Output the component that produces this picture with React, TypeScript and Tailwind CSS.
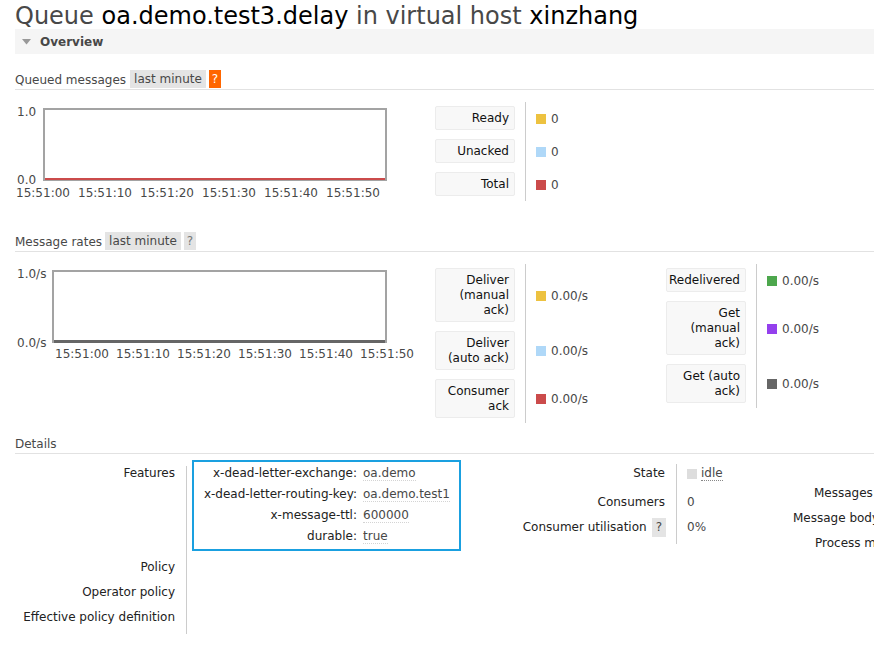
type LegendItem = { label: string; swatch: string; value: string };

const queued: LegendItem[] = [
  { label: 'Ready', swatch: 'bg-[#edc240]', value: '0' },
  { label: 'Unacked', swatch: 'bg-[#afd8f8]', value: '0' },
  { label: 'Total', swatch: 'bg-[#cb4b4b]', value: '0' },
];

const ratesLeft: LegendItem[] = [
  { label: 'Deliver (manual ack)', swatch: 'bg-[#edc240]', value: '0.00/s' },
  { label: 'Deliver (auto ack)', swatch: 'bg-[#afd8f8]', value: '0.00/s' },
  { label: 'Consumer ack', swatch: 'bg-[#cb4b4b]', value: '0.00/s' },
];

const ratesRight: LegendItem[] = [
  { label: 'Redelivered', swatch: 'bg-[#4da74d]', value: '0.00/s' },
  { label: 'Get (manual ack)', swatch: 'bg-[#9440ed]', value: '0.00/s' },
  { label: 'Get (auto ack)', swatch: 'bg-[#666666]', value: '0.00/s' },
];

const ticks = ['15:51:00', '15:51:10', '15:51:20', '15:51:30', '15:51:40', '15:51:50'];

const features = [
  { key: 'x-dead-letter-exchange:', value: 'oa.demo' },
  { key: 'x-dead-letter-routing-key:', value: 'oa.demo.test1' },
  { key: 'x-message-ttl:', value: '600000' },
  { key: 'durable:', value: 'true' },
];

const SectionHeader = ({ title, children }: { title: string; children?: React.ReactNode }) => (
  <div className="flex items-start h-[20px] border-b border-[#e2e2e2] text-[#484848]">
    <span className="leading-[19px] pt-[1px]">{title}</span>
    {children}
  </div>
);

const Legend = ({ items, valueWidth }: { items: LegendItem[]; valueWidth: string }) => (
  <div className="flex flex-col">
    {items.map((item) => (
      <div key={item.label} className="flex">
        <div className="pr-[10px] pt-[4px] pb-[5px]">
          <div className="w-[80px] border border-[#ececec] bg-[#f8f8f8] rounded-[2px] py-[3.5px] pl-[1px] pr-[5px] text-right leading-[15px] text-[#111]">
            {item.label}
          </div>
        </div>
        <div className={`${valueWidth} border-l border-[#cccccc] pl-[10px] flex items-center gap-[5px] text-[#484848]`}>
          <span className={`w-[10px] h-[10px] ${item.swatch}`} />
          {item.value}
        </div>
      </div>
    ))}
  </div>
);

export default function App() {
  return (
    <div className="w-[874px] h-[646px] overflow-hidden bg-white text-[12px] font-['DejaVu_Sans',sans-serif]">
      <div className="w-[1100px] px-[15px]">
        <h1 className="pt-[3px] text-[24px] leading-[26px] font-normal text-[#484848] whitespace-nowrap">
          Queue <span className="text-black">oa.demo.test3.delay</span> in virtual host{' '}
          <span className="text-black">xinzhang</span>
        </h1>

        {/* Overview bar */}
        <div className="h-[25px] bg-[#f5f5f5] flex items-center pl-[7px] text-[#484848]">
          <svg width="9" height="6" viewBox="0 0 9 6">
            <path d="M0 0 L9 0 L4.5 5.5 Z" fill="#999" />
          </svg>
          <span className="ml-[9px] font-bold">Overview</span>
        </div>

        {/* Queued messages */}
        <div className="mt-[16px]">
          <SectionHeader title="Queued messages">
            <span className="ml-[4px] h-[18px] leading-[18px] px-[4px] bg-[#e4e4e4] text-[#484848]">last minute</span>
            <span className="ml-[3px] h-[18px] leading-[18px] px-[3px] bg-[#ff6600] text-white">?</span>
          </SectionHeader>
        </div>
        <div className="flex mt-[12px] mb-[10px]">
          <div className="w-[420px] h-[120px] pt-[6px] text-[#484848]">
            <div className="flex">
              <div className="w-[28px] h-[73px] pl-[2px] flex flex-col justify-between leading-[14px]">
                <span className="-mt-[3.5px]">1.0</span>
                <span className="-mb-[6px]">0.0</span>
              </div>
              <div className="w-[344px] h-[73px] border-2 border-b border-[#a3a3a3] flex flex-col justify-end">
                <div className="h-[2px] bg-[#cb4b4b]" />
              </div>
            </div>
            <div className="flex ml-[-3px] mt-[5px] leading-[14px]">
              {ticks.map((t) => (
                <span key={t} className="w-[62px] text-center">{t}</span>
              ))}
            </div>
          </div>
          <Legend items={queued} valueWidth="w-[120px]" />
        </div>

        {/* Message rates */}
        <SectionHeader title="Message rates">
          <span className="ml-[3px] h-[18px] leading-[18px] px-[4px] bg-[#e4e4e4] text-[#484848]">last minute</span>
          <span className="ml-[3px] h-[18px] leading-[18px] px-[3px] bg-[#e4e4e4] text-[#777]">?</span>
        </SectionHeader>
        <div className="flex mt-[12px] mb-[11px]">
          <div className="w-[420px] h-[120px] pt-[6px] text-[#484848]">
            <div className="flex">
              <div className="w-[37px] h-[73px] pl-[2px] flex flex-col justify-between leading-[14px]">
                <span className="-mt-[3px]">1.0/s</span>
                <span className="-mb-[7px]">0.0/s</span>
              </div>
              <div className="w-[335px] h-[73px] border-2 border-b-0 border-[#a3a3a3] flex flex-col justify-end">
                <div className="h-[3px] bg-[#666666]" />
              </div>
            </div>
            <div className="flex ml-[36.5px] mt-[4px] leading-[14px]">
              {ticks.map((t) => (
                <span key={t} className="w-[61px] text-center">{t}</span>
              ))}
            </div>
          </div>
          <Legend items={ratesLeft} valueWidth="w-[141px]" />
          <Legend items={ratesRight} valueWidth="w-[120px]" />
        </div>

        {/* Details */}
        <SectionHeader title="Details" />
        <div className="flex items-start">
          {/* left table */}
          <div className="mt-[12px] flex flex-col">
            <div className="flex">
              <div className="w-[171px] pr-[11px] text-right leading-[15px] text-[#222]">Features</div>
              <div className="w-[290px] border-l border-[#cccccc] pl-[6px] pb-[9px]">
                <div className="relative mt-[-4px]">
                  {features.map((f) => (
                    <div key={f.key} className="flex h-[21px] items-center">
                      <span className="w-[164px] pl-[6px] text-right text-[#222] whitespace-nowrap">{f.key}</span>
                      <span className="pl-[6px] text-[#484848]">
                        <span className="inline-block leading-[13px] border-b border-dotted border-[#d4d4d4]">{f.value}</span>
                      </span>
                    </div>
                  ))}
                  <div className="absolute -top-[2px] -left-[1px] w-[269px] h-[91px] border-2 border-[#1aa0e0] pointer-events-none" />
                </div>
              </div>
            </div>
            {['Policy', 'Operator policy', 'Effective policy definition'].map((label, i) => (
              <div key={label} className={`flex ${i === 2 ? 'h-[29px]' : 'h-[25px]'}`}>
                <div className="w-[171px] pr-[11px] text-right leading-[25px] text-[#222]">{label}</div>
                <div className="w-[290px] border-l border-[#cccccc]" />
              </div>
            ))}
          </div>

          {/* middle table */}
          <div className="mt-[10px] flex flex-col">
            <div className="flex h-[29px]">
              <div className="w-[200px] pr-[11px] pt-[2px] text-right leading-[15px] text-[#222]">State</div>
              <div className="w-[100px] border-l border-[#cccccc] pl-[10px] pt-[2px] leading-[15px] flex items-start text-[#484848]">
                <span className="mt-[2.5px] w-[10px] h-[10px] bg-[#dddddd]" />
                <span className="ml-[4px] leading-[14px] border-b border-dotted border-[#888]">idle</span>
              </div>
            </div>
            <div className="flex h-[24px]">
              <div className="w-[200px] pr-[11px] pt-[1.5px] text-right leading-[15px] text-[#222]">Consumers</div>
              <div className="w-[100px] border-l border-[#cccccc] pl-[10px] pt-[1.5px] leading-[15px] text-[#484848]">0</div>
            </div>
            <div className="flex h-[27px]">
              <div className="w-[200px] pr-[10px] pt-[1px] flex justify-end items-start leading-[19px] text-[#222] whitespace-nowrap">
                Consumer utilisation
                <span className="ml-[5px] h-[19px] px-[4px] bg-[#e4e4e4] text-[#484848]">?</span>
              </div>
              <div className="w-[100px] border-l border-[#cccccc] pl-[10px] pt-[1px] leading-[19px] text-[#484848]">0%</div>
            </div>
          </div>

          {/* right table (clipped) */}
          <div className="pt-[26.5px] pl-[17px] flex flex-col leading-[25px] text-[#222] whitespace-nowrap">
            <span className="pl-[21px]">Messages</span>
            <span>Message body bytes</span>
            <span className="pl-[22px]">Process memory</span>
          </div>
        </div>
      </div>
    </div>
  );
}
